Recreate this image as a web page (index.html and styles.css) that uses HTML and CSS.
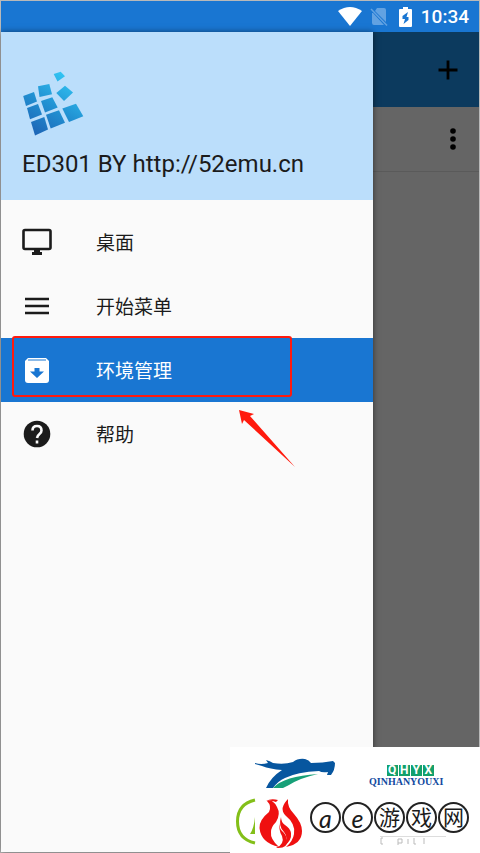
FILE: index.html
```html
<!DOCTYPE html>
<html lang="zh-CN">
<head>
    <meta charset="UTF-8">
    <meta name="viewport" content="width=device-width, initial-scale=1.0">
    <title>ED301</title>
    <link rel="stylesheet" href="styles.css">
</head>
<body>
    <div class="phone">
        <header class="status-bar">
            <svg width="24" height="20" viewBox="0 0 24 20"><path d="M0 4Q12-4 24 4L12 19Z" fill="#fff"/></svg>
            <svg class="no-sim" width="18" height="20" viewBox="0 0 18 20">
                <path d="M7 1H14Q16 1 16 3V15L5 4ZM3 6L14 18H4Q2 18 2 16V6Z" fill="#62a2e2"/>
                <path d="M1 2L17 18.500" stroke="#62a2e2" stroke-width="1.500"/>
            </svg>
            <svg class="battery" width="13" height="20" viewBox="0 0 13 20">
                <path d="M4 0H9V2H12Q13 2 13 3V19Q13 20 12 20H1Q0 20 0 19V3Q0 2 1 2H4Z" fill="#fff"/>
                <path d="M9 5L3.500 9V12H6L4.500 17L9.500 13V10H7.500Z" fill="#1976d2"/>
            </svg>
            <span class="clock">10:34</span>
        </header>

        <div class="screen">
            <aside class="drawer">
                <div class="drawer-header">
                    <svg class="logo" width="62" height="66" viewBox="0 0 62 66">
                        <defs>
                            <linearGradient id="tiles" gradientUnits="userSpaceOnUse" x1="10" y1="64" x2="46" y2="4">
                                <stop offset="0" stop-color="#1c62b4"/>
                                <stop offset=".5" stop-color="#2291d2"/>
                                <stop offset="1" stop-color="#32c6f4"/>
                            </linearGradient>
                        </defs>
                        <g fill="url(#tiles)">
                            <path d="M31.700 3L38.700 0.700L43 5.300L35.500 10.500Z"/>
                            <path d="M16 15.300L27.300 13L30 23.300L17.500 26Z"/>
                            <path d="M34.300 22L43 14.700L51 21.500L42 30Z"/>
                            <path d="M1.200 25L12 21L15 30.500L4 35Z"/>
                            <path d="M19 30L30.300 26.300L35.700 36.500L23 41.500Z"/>
                            <path d="M5 37L16 33L20 43.500L8 48.300Z"/>
                            <path d="M40.300 37.500L54 32.700L61.300 45.300L47 51Z"/>
                            <path d="M24 43.700L37 39.300L43 51.700L28.700 57.500Z"/>
                            <path d="M9 51L22.300 46L26 58.500L13 64.500Z"/>
                        </g>
                    </svg>
                    <div class="title">ED301 BY http://52emu.cn</div>
                </div>

                <nav class="menu">
                    <a class="menu-item" href="#desktop">
                        <svg width="30" height="30" viewBox="0 0 30 30">
                            <rect x="1.500" y="3" width="27" height="19" rx="1.500" fill="none" stroke="#1b1b1b" stroke-width="2.600"/>
                            <path d="M12 22H18V25H20V28H10V25H12Z" fill="#1b1b1b"/>
                        </svg>
                        <span>桌面</span>
                    </a>
                    <a class="menu-item" href="#start">
                        <svg width="30" height="30" viewBox="0 0 30 30">
                            <path d="M3 8H27M3 15H27M3 22H27" stroke="#1b1b1b" stroke-width="2.600"/>
                        </svg>
                        <span>开始菜单</span>
                    </a>
                    <a class="menu-item active" href="#containers">
                        <svg width="30" height="30" viewBox="0 0 30 30">
                            <path d="M6 3H24L27 6V25Q27 28 24 28H6Q3 28 3 25V6Z" fill="#fff"/>
                            <path d="M6 5H24" stroke="#1976d2" stroke-width="1"/>
                            <path d="M12.500 13H17.500V16.500H22L15 23L8 16.500H12.500Z" fill="#1976d2"/>
                        </svg>
                        <span>环境管理</span>
                        <i class="highlight"></i>
                        <svg class="arrow" width="56" height="58" viewBox="0 0 56 58">
                            <path d="M0 0L15 4L11 6L56 57L5 10L3 14Z" fill="#ff1a0d"/>
                        </svg>
                    </a>
                    <a class="menu-item" href="#help">
                        <svg width="30" height="30" viewBox="0 0 30 30">
                            <circle cx="15" cy="15" r="13.300" fill="#1b1b1b"/>
                            <path d="M10.500 11.500Q10.500 7 15 7T19.500 11.500Q19.500 13.500 17.500 15T15 19" fill="none" stroke="#fafafa" stroke-width="2.600"/>
                            <path d="M13.700 21.500H16.300V24.500H13.700Z" fill="#fafafa"/>
                        </svg>
                        <span>帮助</span>
                    </a>
                </nav>
            </aside>

            <main class="content">
                <div class="toolbar">
                    <button class="icon-button" aria-label="Add">
                        <svg width="20" height="20" viewBox="0 0 20 20"><path d="M10 0.500V19.500M0.500 10H19.500" stroke="#000" stroke-width="2.800"/></svg>
                    </button>
                </div>
                <div class="list-row">
                    <button class="icon-button more" aria-label="More">
                        <svg width="10" height="24" viewBox="0 0 10 24"><circle cx="5" cy="4" r="2.800"/><circle cx="5" cy="12" r="2.800"/><circle cx="5" cy="20" r="2.800"/></svg>
                    </button>
                </div>
            </main>
        </div>

        <div class="watermark">
            <div class="mark-top">
                <svg width="84" height="30" viewBox="0 0 84 30">
                    <path d="M1 5Q7 7 14 5L12 2Q16 3 19 5Q30 7 39 4Q44 0 51 1Q55 2 57 5Q69 5 79 3L81 5Q81 12 77 17L73 17L74 14Q68 15 65 13Q43 14 31 20Q24 23 19 30H12Q17 19 28 12Q16 11 8 8L1 6Z" fill="#07569f"/>
                    <path d="M19 30Q30 18 64 16Q46 20 35 27L29 30Z" fill="#17a078"/>
                </svg>
                <div class="brand">
                    <div class="brand-tiles"><b>Q</b><b>H</b><b>Y</b><b>X</b></div>
                    <div class="brand-name">QINHANYOUXI</div>
                </div>
            </div>
            <div class="mark-bottom">
                <svg width="68" height="54" viewBox="0 0 68 54">
                    <path d="M19 3Q1.500 7 1.500 24.500T19 46" fill="none" stroke="#83bf19" stroke-width="3"/>
                    <path d="M19 20V37H14Q18 31 19 20Z" fill="#83bf19"/>
                    <path d="M30 4Q35 1 42 3L40 5Q35 3 30 4Z" fill="#ef1010"/>
                    <path d="M31 4Q36 9 33 15Q23 23 23.500 31Q25 46 43 50Q34 42 35 35Q35 30 40 25Q45 17 41 10Q39 6 36 4Z" fill="#ef1010"/>
                    <path d="M52 2Q43 11 49 18Q60 27 58 37Q57 44 50 50Q66 47 66 34Q66 26 58 17Q51 10 52 2Z" fill="#ef1010"/>
                    <path d="M45 20Q42 29 48 35Q53 41 48 49Q56 44 55 36Q54 31 49 28Q45 25 45 20Z" fill="#ef1010"/>
                    <path d="M44 26Q42 32 46 39Q49 47 40 51Q52 52 51 43Q50 37 46 34Q43 31 44 26Z" fill="#ef1010"/>
                </svg>
                <div class="site">
                    <div class="site-name"><span class="latin">a</span><span class="latin">e</span><span>游</span><span>戏</span><span>网</span></div>
                    <svg class="site-shadow" width="72" height="10" viewBox="0 0 72 10">
                        <path d="M0 1.500H66" stroke="#ddd"/>
                        <path d="M3 3H1V9H3M18 10V4H22V8H18M28 4V9M34 3V9H36M44 3V9" fill="none" stroke="#bbb"/>
                    </svg>
                </div>
            </div>
        </div>
    </div>
</body>
</html>
```
FILE: styles.css
```css
* {
    box-sizing: border-box;
}

body {
    margin: 0;
    font-family: Roboto, "Noto Sans CJK SC", sans-serif;
    color: #1b1b1b;
}

.phone {
    position: relative;
    display: flex;
    flex-direction: column;
    min-height: 100vh;
    border: 1px solid #b9b9b9;
    background-color: #fafafa;
}

/* Status bar */
.status-bar {
    display: flex;
    align-items: center;
    justify-content: flex-end;
    height: 31px;
    padding-right: 10px;
    background-color: #1976d2;
    color: #fff;
}

.no-sim {
    margin-left: 8px;
}

.battery {
    margin-left: 11px;
}

.clock {
    margin-left: 9px;
    font-size: 19px;
    font-weight: 500;
}

.screen {
    display: grid;
    grid-template-columns: 7fr 2fr;
    flex: 1;
}

/* Drawer */
.drawer {
    position: relative;
    background-color: #fafafa;
    box-shadow: 0 0 6px rgba(0, 0, 0, 0.5);
}

.drawer-header {
    display: flex;
    flex-direction: column;
    height: 168px;
    padding: 39px 21px 0;
    background-color: #bbdefb;
}

.title {
    margin-top: 12px;
    font-size: 24px;
    line-height: 30px;
}

.menu {
    padding-top: 10px;
}

.menu-item {
    position: relative;
    display: flex;
    align-items: center;
    gap: 44px;
    height: 64px;
    padding-left: 21px;
    font-size: 19px;
    color: #1b1b1b;
    text-decoration: none;
}

.menu-item span {
    padding-bottom: 2px;
}

.menu-item.active {
    z-index: 1;
    background-color: #1976d2;
    color: #fff;
}

.highlight {
    position: absolute;
    top: -2px;
    left: 11px;
    width: 280px;
    height: 61px;
    border: 2px solid #ff1a0d;
    border-radius: 3px;
}

.arrow {
    position: absolute;
    top: 72px;
    left: 238px;
}

/* Page behind the drawer */
.content {
    background-color: #656565;
}

.toolbar,
.list-row {
    display: flex;
    align-items: center;
    justify-content: flex-end;
}

.toolbar {
    height: 75px;
    padding-right: 21px;
    background-color: #0c3a5e;
}

.list-row {
    height: 65px;
    padding-right: 21px;
    border-bottom: 1px solid #5a5a5a;
}

.icon-button {
    display: flex;
    padding: 0;
    border: none;
    background: none;
    cursor: pointer;
}

/* Watermark */
.watermark {
    position: absolute;
    right: -1px;
    bottom: -1px;
    z-index: 2;
    width: 250px;
    height: 106px;
    background-color: #fff;
}

.mark-top {
    display: flex;
    align-items: flex-end;
    gap: 31px;
    height: 41px;
    padding-left: 24px;
}

.brand {
    display: flex;
    flex-direction: column;
    align-items: center;
}

.brand-tiles {
    display: flex;
    gap: 1px;
    padding-left: 8px;
}

.brand-tiles b {
    width: 11px;
    height: 11px;
    background-color: #12a06c;
    color: #fff;
    font-size: 12px;
    line-height: 11px;
    text-align: center;
}

.brand-name {
    color: #124a9f;
    font-family: "Liberation Serif", serif;
    font-size: 10px;
    font-weight: bold;
    line-height: 12px;
}

.mark-bottom {
    display: flex;
    gap: 6px;
    padding: 9px 0 0 6px;
}

.site {
    display: flex;
    flex-direction: column;
    gap: 2px;
    padding-top: 5px;
}

.site-name {
    display: flex;
    gap: 1px;
}

.site-name span {
    width: 31px;
    height: 31px;
    border: 2px solid #222;
    border-radius: 50%;
    font-size: 21px;
    line-height: 28px;
    text-align: center;
}

.site-name .latin {
    font-family: Lato, sans-serif;
    font-size: 25px;
    font-style: italic;
}

.site-shadow {
    margin-left: 70px;
}
```
